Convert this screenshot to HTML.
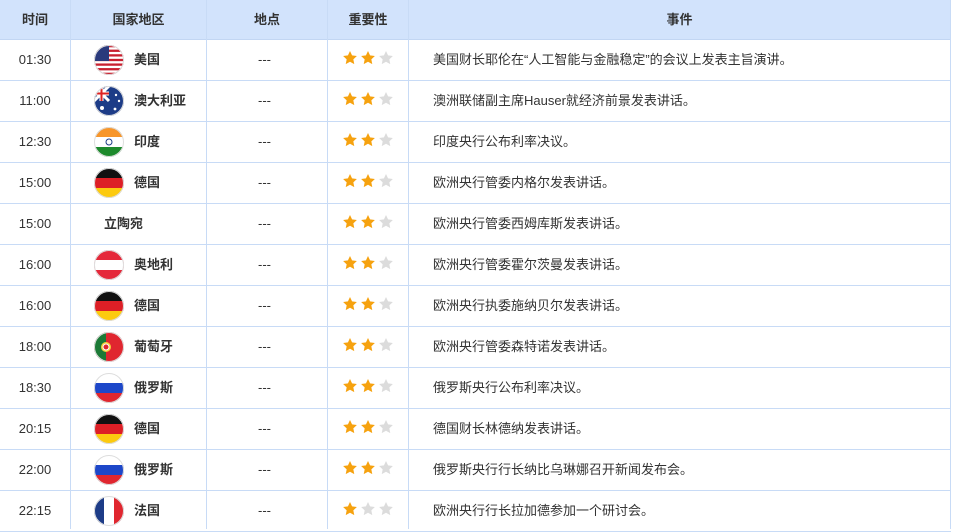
<!DOCTYPE html>
<html><head><meta charset="utf-8"><style>
body{margin:0;width:954px;height:529px;overflow:hidden;background:#fff;font-family:"Liberation Sans","Noto Sans CJK SC",sans-serif;color:#333;}
.hd{position:absolute;left:0;top:0;width:951px;height:39px;background:#d2e3fc;border-bottom:1px solid #c2d6f3;}
.c{position:absolute;font-size:13px;height:40px;line-height:40px;white-space:nowrap;}
.vl{position:absolute;top:0;width:1px;height:529px;background:#c8dbf6;}
.hl{position:absolute;left:0;width:951px;height:1px;background:#c8dbf6;}
.h{position:absolute;top:0;height:39px;line-height:39px;font-size:13px;font-weight:bold;color:#333;text-align:center;}
.fl{position:absolute;left:94px;width:30px;height:30px;}
.st{position:absolute;left:342px;}
</style></head><body>
<div class="hd"></div>
<div class="h" style="left:0;width:70px">时间</div>
<div class="h" style="left:71px;width:135px">国家地区</div>
<div class="h" style="left:207px;width:120px">地点</div>
<div class="h" style="left:328px;width:80px">重要性</div>
<div class="h" style="left:409px;width:541px">事件</div>
<div class="vl" style="left:70px"></div><div class="vl" style="left:206px"></div><div class="vl" style="left:327px"></div><div class="vl" style="left:408px"></div><div class="vl" style="left:950px"></div>
<svg width="0" height="0" style="position:absolute"><defs>
<symbol id="s" viewBox="0 0 24 24"><path d="M12 1.5l3.1 6.6 7.2.9-5.3 5 1.4 7.1L12 17.6 5.6 21.1 7 14 1.7 9l7.2-.9z"/></symbol>
<clipPath id="cc"><circle cx="15" cy="15" r="15"/></clipPath>
</defs></svg>
<div id="rows"></div>
<script>
var R=[["01:30","us","美国","美国财长耶伦在“人工智能与金融稳定”的会议上发表主旨演讲。",2],
["11:00","au","澳大利亚","澳洲联储副主席Hauser就经济前景发表讲话。",2],
["12:30","in","印度","印度央行公布利率决议。",2],
["15:00","de","德国","欧洲央行管委内格尔发表讲话。",2],
["15:00","","立陶宛","欧洲央行管委西姆库斯发表讲话。",2],
["16:00","at","奥地利","欧洲央行管委霍尔茨曼发表讲话。",2],
["16:00","de","德国","欧洲央行执委施纳贝尔发表讲话。",2],
["18:00","pt","葡萄牙","欧洲央行管委森特诺发表讲话。",2],
["18:30","ru","俄罗斯","俄罗斯央行公布利率决议。",2],
["20:15","de","德国","德国财长林德纳发表讲话。",2],
["22:00","ru","俄罗斯","俄罗斯央行行长纳比乌琳娜召开新闻发布会。",2],
["22:15","fr","法国","欧洲央行行长拉加德参加一个研讨会。",1]];
function flag(f){var g='';
if(f=='us'){for(var i=0;i<7;i++)g+='<rect y="'+(i*30/6.5)+'" width="30" height="2.3" fill="#c8202f"/>';g='<rect width="30" height="30" fill="#fff"/>'+g+'<rect width="15" height="16" fill="#2a3a7c"/>';}
if(f=='au')g='<rect width="30" height="30" fill="#1d3c87"/><path d="M0 0L15 15M15 0L0 15" stroke="#fff" stroke-width="3"/><path d="M7.5 0V15M0 7.5H15" stroke="#fff" stroke-width="4"/><path d="M7.5 0V15M0 7.5H15" stroke="#d22" stroke-width="2"/><circle cx="22" cy="9" r="1.2" fill="#fff"/><circle cx="25" cy="15" r="1.2" fill="#fff"/><circle cx="21" cy="23" r="1.4" fill="#fff"/><circle cx="8" cy="22" r="2" fill="#fff"/>';
if(f=='in')g='<rect width="30" height="10" fill="#f7962b"/><rect y="10" width="30" height="10" fill="#fff"/><rect y="20" width="30" height="10" fill="#1d8a2c"/><circle cx="15" cy="15" r="3" fill="none" stroke="#1d3c87"/>';
if(f=='de')g='<rect width="30" height="10" fill="#111"/><rect y="10" width="30" height="10" fill="#dd1f26"/><rect y="20" width="30" height="10" fill="#fcca0f"/>';
if(f=='at')g='<rect width="30" height="30" fill="#e5283a"/><rect y="10" width="30" height="10" fill="#fff"/>';
if(f=='pt')g='<rect width="30" height="30" fill="#e0262f"/><rect width="12" height="30" fill="#1c7a36"/><circle cx="12" cy="15" r="5" fill="#f6d03a"/><circle cx="12" cy="15" r="3" fill="#e0262f" stroke="#fff"/>';
if(f=='ru')g='<rect width="30" height="10" fill="#fff" /><rect y="10" width="30" height="10" fill="#1d47c9"/><rect y="20" width="30" height="10" fill="#e0262f"/>';
if(f=='fr')g='<rect width="10" height="30" fill="#1d3c87"/><rect x="10" width="10" height="30" fill="#fff"/><rect x="20" width="10" height="30" fill="#e0262f"/>';
return '<g clip-path="url(#cc)">'+g+'</g><circle cx="15" cy="15" r="14.5" fill="none" stroke="#ddd" stroke-width="1"/>';}
var h='';
R.forEach(function(r,i){var y=40+41*i;
h+='<div class="hl" style="top:'+(y+40)+'px"></div>';
h+='<div class="c" style="left:0;width:70px;text-align:center;top:'+y+'px">'+r[0]+'</div>';
if(r[1])h+='<svg class="fl" style="top:'+(y+5)+'px" viewBox="0 0 30 30">'+flag(r[1])+'</svg>';
h+='<div class="c" style="left:'+(r[1]?134:104)+'px;top:'+y+'px;font-weight:bold">'+r[2]+'</div>';
h+='<div class="c" style="left:258px;top:'+y+'px">---</div>';
var s='';for(var k=0;k<3;k++)s+='<svg width="16" height="16" style="position:absolute;left:'+(k*18)+'px;top:0;fill:'+(k<r[4]?'#f6a20f':'#dcdcdc')+'"><use href="#s"/></svg>';
h+='<div class="st" style="top:'+(y+10)+'px">'+s+'</div>';
h+='<div class="c" style="left:433px;top:'+y+'px">'+r[3]+'</div>';});
document.getElementById('rows').innerHTML=h;
</script>
</body></html>
